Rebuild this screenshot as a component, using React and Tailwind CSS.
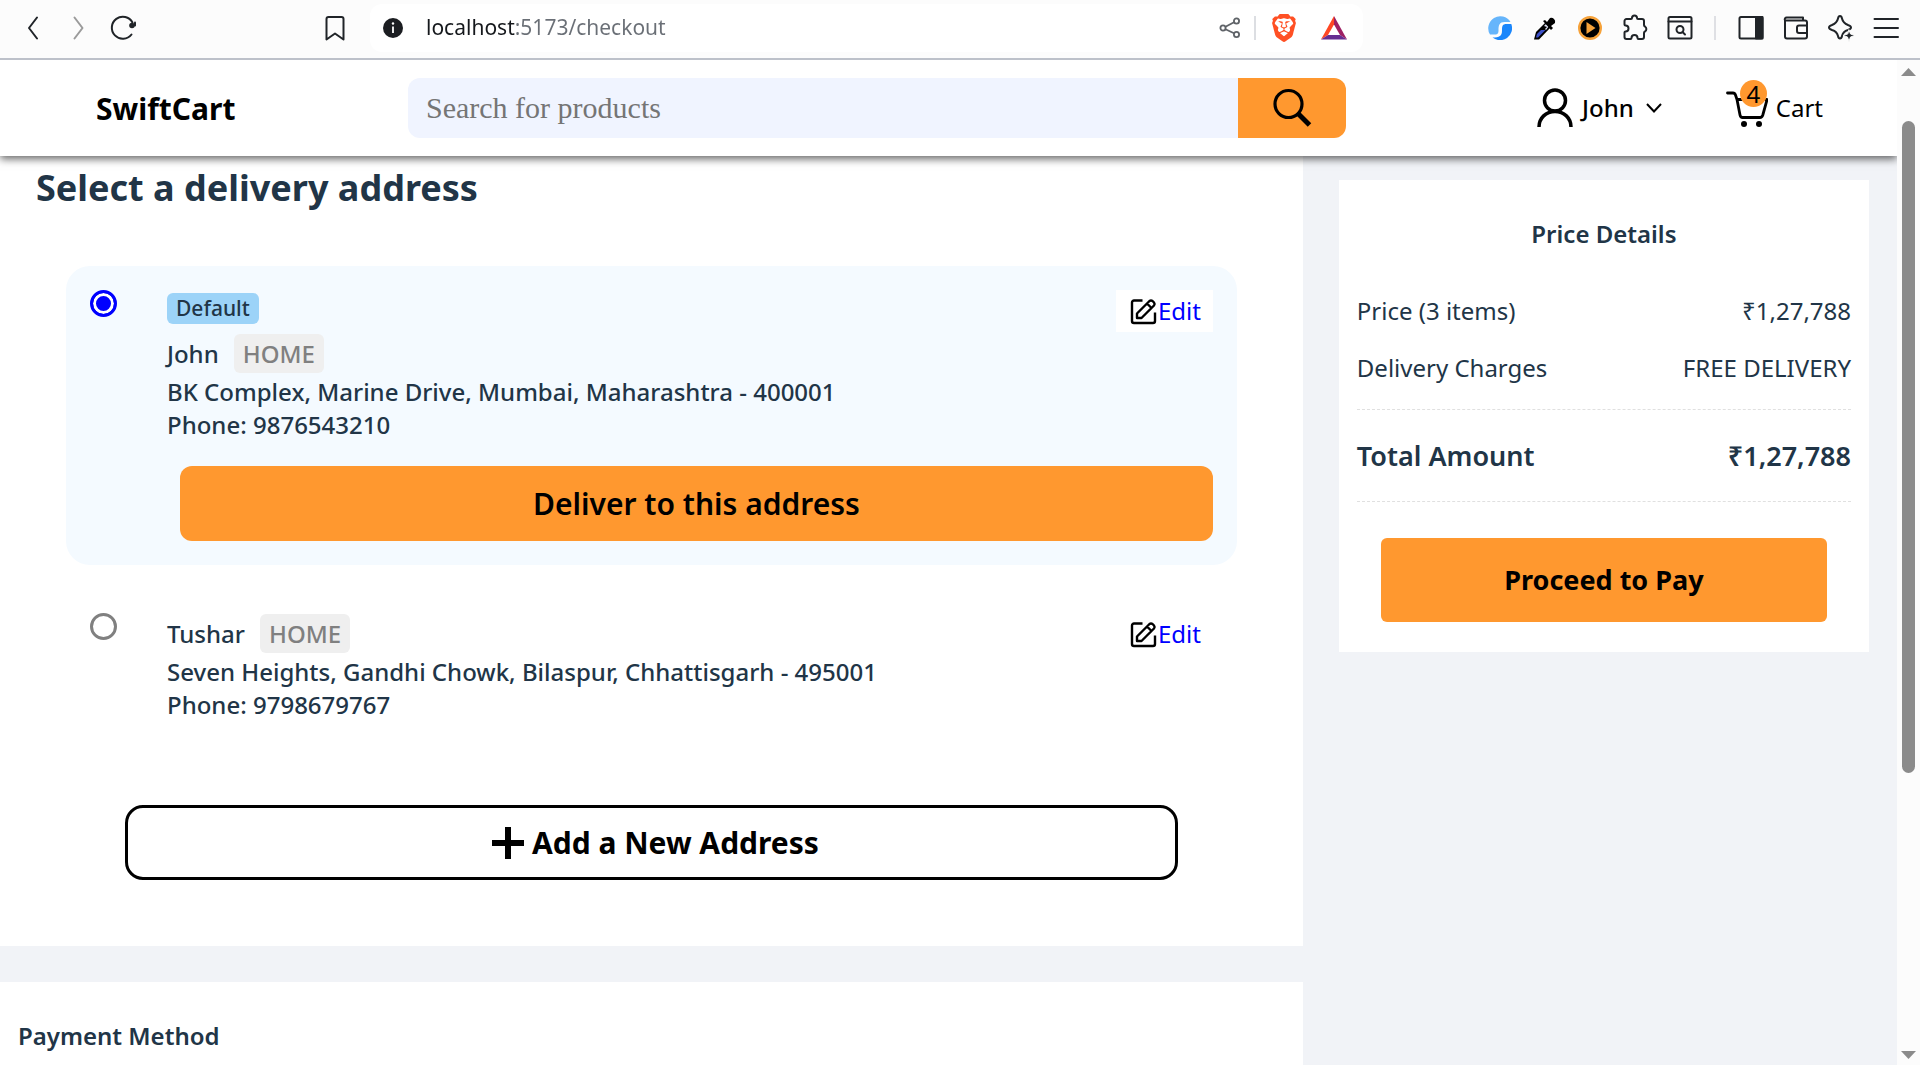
import React from "react";
import { SiBrave } from "react-icons/si";

const dark = "#202428";

function ToolButton({ label, children }) {
  return (
    <button aria-label={label} className="flex h-11 w-[45px] items-center justify-center">
      {children}
    </button>
  );
}

function Icon({ children, size = 28, stroke = dark, width = 2 }) {
  return (
    <svg width={size} height={size} viewBox="0 0 28 28" fill="none" stroke={stroke} strokeWidth={width} strokeLinejoin="round" strokeLinecap="round" aria-hidden="true">
      {children}
    </svg>
  );
}

function BrowserBar() {
  return (
    <div className="z-20 flex shrink-0 items-center border-b-2 border-[#bdc1ca] bg-[#fcfcfc] pt-1 pb-1.5 pr-3 pl-[10px]">
      <ToolButton label="Back">
        <Icon><path d="M18 3.500 10 14l8 10.500" /></Icon>
      </ToolButton>
      <ToolButton label="Forward">
        <Icon stroke="#9b9b9b"><path d="M10.500 3.500 18.500 14l-8 10.500" /></Icon>
      </ToolButton>
      <ToolButton label="Reload">
        <Icon>
          <path d="M22.500 20.500A11 11 0 1 1 23.500 8.500" />
          <circle cx="23" cy="11.500" r="2.800" fill={dark} stroke="none" />
          <path d="M26 8.500v3" />
        </Icon>
      </ToolButton>
      <div className="mr-[13px] ml-[167px]">
        <ToolButton label="Bookmark">
          <Icon><path d="M5.500 5a2 2 0 0 1 2-2h13a2 2 0 0 1 2 2v20.500L14 19.500l-8.500 6z" /></Icon>
        </ToolButton>
      </div>
      <div className="flex h-12 flex-1 items-center rounded-xl bg-white pl-[13px]">
        <svg width="20" height="20" viewBox="0 0 20 20" aria-hidden="true">
          <circle cx="10" cy="10" r="10" fill="#1b1d21" />
          <circle cx="10" cy="5.500" r="1.200" fill="#fff" />
          <path d="M10 8.500v6.500" stroke="#fff" strokeWidth="1.800" />
        </svg>
        <input
          type="text"
          aria-label="Address"
          defaultValue="localhost:5173/checkout"
          className="ml-[23px] min-w-0 flex-1 bg-[linear-gradient(90deg,#15181c_89px,#6a6f76_89px)] bg-clip-text text-[21px] text-transparent outline-none"
        />
        <button aria-label="Share" className="mr-[13px]">
          <svg width="22" height="22" viewBox="0 0 22 22" fill="none" stroke="#5f6368" strokeWidth="1.800" aria-hidden="true">
            <circle cx="4" cy="11" r="2.600" /><circle cx="17.500" cy="4" r="2.600" /><circle cx="17.500" cy="17.500" r="2.600" />
            <path d="m6.500 9.800 8.500-4.500M6.500 12.200l8.500 4" />
          </svg>
        </button>
        <span className="h-6 w-0.5 bg-[#dcdee2]" />
        <button aria-label="Brave Shields" className="mx-[14px]"><SiBrave size={28} color="#ff5024" /></button>
        <button aria-label="Rewards" className="mr-[15px] ml-2">
          <svg width="28" height="28" viewBox="0 0 28 28" aria-hidden="true">
            <path d="M14 2 1 25.500l7-4.500 6-10.500z" fill="#ff4724" />
            <path d="m14 2 13 23.500-7-4.500-6-10.500z" fill="#9e1f63" />
            <path d="M1 25.500h26L20 21H8z" fill="#662d91" />
          </svg>
        </button>
      </div>
      <div className="ml-[114px] flex items-center">
        <ToolButton label="Sync extension">
          <svg width="24" height="24" viewBox="0 0 24 24" aria-hidden="true">
            <path d="M22.500 6A12 12 0 1 0 2 18.500h5c3 0 3.500-1.500 3.500-4.500 0-5 1-8 6-8z" fill="#66b5fb" />
            <path d="M23.300 8A12 12 0 0 1 4.500 21.500c7 0 9.500-1.500 9.500-7 0-4.500.5-6.500 4.500-6.500z" fill="#1a86fb" />
          </svg>
        </ToolButton>
        <ToolButton label="Color picker">
          <svg width="24" height="24" viewBox="0 0 24 24" aria-hidden="true">
            <path d="M13 6 3 16l-2 7.500h5L18 11z" fill="#000" />
            <path d="m8 14-4 4-1 3.500h2L12.500 14z" fill="#3d50c8" />
            <path d="m13 8-2 2 3 1-2 2 1 1 3-4z" fill="#dfe3f5" />
            <path d="m10 5 2-1 2 2 3-4a4 4 0 0 1 5 5l-4 3 2 2-2 2z" fill="#000" />
          </svg>
        </ToolButton>
        <ToolButton label="Player">
          <svg width="24" height="24" viewBox="0 0 24 24" aria-hidden="true">
            <circle cx="12" cy="12" r="10.800" fill="#000" stroke="#f6a23a" strokeWidth="2.400" />
            <path d="m8.500 6 9 6-9 6z" fill="#f6a23a" />
          </svg>
        </ToolButton>
        <ToolButton label="Extensions">
          <Icon>
            <path d="M3.500 7a2 2 0 0 1 2-2H10q1 0 1-1a2.500 2.500 0 0 1 5 0q0 1 1 1h4a2 2 0 0 1 2 2v4q0 1 1 1.500a3 3 0 0 1 0 5q-1 .5-1 1.500v4a2 2 0 0 1-2 2h-3.500q-1 0-1-1a3 3 0 0 0-6 0q0 1-1 1h-4a2 2 0 0 1-2-2v-4.500q0-1 1-1a3 3 0 0 0 0-6q-1 0-1-1z" />
          </Icon>
        </ToolButton>
        <ToolButton label="Search tabs">
          <Icon>
            <rect x="2.500" y="3" width="23" height="21.500" rx="1.500" /><path d="M2.500 7.500h23" />
            <circle cx="14" cy="15.500" r="3.500" /><path d="m16.500 18 2.500 2.500" />
          </Icon>
        </ToolButton>
        <span className="mx-3 h-6 w-0.5 bg-[#dfe0e4]" />
        <ToolButton label="Side panel">
          <Icon><rect x="2.500" y="3" width="23" height="21.500" rx="1.500" /><path d="M19 3h6.500v21.500H19z" fill={dark} /></Icon>
        </ToolButton>
        <ToolButton label="Wallet">
          <Icon>
            <path d="M3 6.500v16a2 2 0 0 0 2 2h18a2 2 0 0 0 2-2v-14a2 2 0 0 0-2-2H3a2 2 0 0 1 2-3h16v3M25 11.500h-8a2 2 0 0 0-2 2v3.500a2 2 0 0 0 2 2h8" />
          </Icon>
        </ToolButton>
        <ToolButton label="Leo AI">
          <Icon>
            <path d="M13 2q1.500 0 2 2.500 1 4.500 6 6.500 3 1 3 2.500t-3 2.500q-5 1.500-6 6-.5 2.500-2 2.500T11 22q-1-4.500-6-6-3-1-3-2.500T5 11q5-2 6-6.500Q11.500 2 13 2z" />
            <path d="m22 16 1.500 4L28 21.500 23.500 23 22 27.500 20.500 23 16 21.500l4.500-1.500z" fill={dark} stroke="#fcfcfc" strokeWidth="1" />
          </Icon>
        </ToolButton>
        <ToolButton label="Menu">
          <Icon><path d="M2.500 5h23.500M2.500 14h23.500M2.500 23h23.500" /></Icon>
        </ToolButton>
      </div>
    </div>
  );
}

function StoreHeader() {
  return (
    <header className="z-10 flex h-24 shrink-0 items-center bg-white pl-24 text-2xl text-black shadow-[0_3px_8px_0_rgba(0,0,0,0.6)]">
      <a href="#home" className="w-[312px] pt-0.5 text-[30px] leading-9 font-bold">SwiftCart</a>
      <form className="flex h-15 flex-1" onSubmit={(e) => e.preventDefault()}>
        <input
          type="text"
          aria-label="Search for products"
          placeholder="Search for products"
          className="min-w-0 flex-1 rounded-l-xl bg-[#f0f4ff] px-[18px] font-['Liberation_Serif',serif] text-[30px] outline-none placeholder:text-[#757575]"
        />
        <button aria-label="Search" className="flex w-27 items-center justify-center rounded-r-xl bg-[#ff982f]">
          <svg width="40" height="40" viewBox="0 0 40 40" fill="none" stroke="#000" aria-hidden="true">
            <circle cx="16.500" cy="16" r="13.500" strokeWidth="3.200" />
            <path d="M25.500 25 37.500 37" strokeWidth="5" />
          </svg>
        </button>
      </form>
      <button className="ml-[191px] flex items-center font-medium">
        <svg width="36" height="40" viewBox="0 0 36 40" fill="none" stroke="#000" strokeWidth="3.500" aria-hidden="true">
          <circle cx="18" cy="12.500" r="10.500" />
          <path d="M2 39c0-9 7-15.500 16-15.500S34 30 34 39" />
        </svg>
        <span className="ml-[9px]">John</span>
        <svg className="ml-3" width="16" height="10" viewBox="0 0 16 10" fill="none" stroke="#000" strokeWidth="2" aria-hidden="true">
          <path d="m1 1 7 7.500L15 1" />
        </svg>
      </button>
      <a href="#cart" className="mr-[74px] ml-16 flex items-center">
        <span className="relative">
          <svg width="42" height="40" viewBox="0 0 42 40" fill="none" stroke="#000" strokeWidth="2.800" strokeLinecap="round" strokeLinejoin="round" aria-hidden="true">
            <path d="M1.500 5H7q1.800 0 2.500 2l1.500 4.500L14 27q.5 2.500 2.500 2.500H34q2 0 2.800-2.500L41 12M11 11.500h30" />
            <circle cx="18" cy="36" r="3" fill="#000" stroke="none" /><circle cx="33" cy="36" r="3" fill="#000" stroke="none" />
          </svg>
          <span className="absolute -top-2 left-[14px] flex h-[27px] w-[27px] items-center justify-center rounded-full bg-[#ff982f]">4</span>
        </span>
        <span className="ml-2">Cart</span>
      </a>
    </header>
  );
}

function EditIcon() {
  return (
    <svg width="27" height="27" viewBox="0 0 27 27" fill="none" stroke="#000" strokeWidth="2.400" strokeLinejoin="round" aria-hidden="true">
      <path d="M12.500 2.500H4a2 2 0 0 0-2 2V23a2 2 0 0 0 2 2h19a2 2 0 0 0 2-2v-8.500" />
      <path d="M7 20v-4.500L19.500 3q1.500-1.200 3 0l1.500 1.500q1.200 1.500 0 3L11.500 20zM17 5.500 21.500 10" />
    </svg>
  );
}

function Address({ id, name, address, phone, isDefault, onSelect, selected }) {
  return (
    <article className={selected ? "flex rounded-3xl bg-[#f4faff] p-6" : "flex rounded-3xl bg-white p-6"}>
      <input
        id={id}
        type="radio"
        name="address"
        checked={selected}
        onChange={onSelect}
        className="h-[27px] w-[27px] shrink-0 appearance-none rounded-full border-3 border-[#808080] bg-white checked:border-[#0000ff] checked:bg-[#0000ff] checked:shadow-[inset_0_0_0_3px_white]"
      />
      <div className="ml-[50px] flex-1">
        <div className="flex items-start justify-between">
          <label htmlFor={id} className="block">
            {isDefault && (
              <span className="mt-[3px] mb-[10px] block w-fit rounded-md bg-[#9cd3f8] px-[9px] text-[21px] leading-[31px]">Default</span>
            )}
            <span className={isDefault ? "flex items-center" : "flex items-center pt-px"}>
              {name}
              <span className="ml-[15px] rounded-md bg-[#efefef] px-[9px] py-[3px] text-[#808080]">HOME</span>
            </span>
            <span className="mt-[2px] block">{address}</span>
            <span className="block">Phone: {phone}</span>
          </label>
          <button className="flex items-center bg-white px-3 py-1 pl-[14px] font-normal leading-[34px] text-[#0000ff]">
            <EditIcon />
            <span className="ml-px">Edit</span>
          </button>
        </div>
        {selected && (
          <button className="mt-[25px] ml-[13px] flex h-[75px] w-[calc(100%-13px)] items-center justify-center rounded-xl bg-[#ff982f] text-[30px] font-semibold text-black">
            Deliver to this address
          </button>
        )}
      </div>
    </article>
  );
}

const addresses = [
  { id: "john", name: "John", address: "BK Complex, Marine Drive, Mumbai, Maharashtra - 400001", phone: "9876543210", isDefault: true },
  { id: "tushar", name: "Tushar", address: "Seven Heights, Gandhi Chowk, Bilaspur, Chhattisgarh - 495001", phone: "9798679767" },
];

function PriceDetails() {
  return (
    <aside className="mt-6 mr-7 w-[calc(28%-1px)] shrink-0 self-start bg-white px-[18px] pb-[30px] font-normal">
      <h2 className="pt-[37px] text-center font-semibold">Price Details</h2>
      <dl className="mt-8">
        <div className="flex justify-between py-3"><dt>Price (3 items)</dt><dd>₹1,27,788</dd></div>
        <div className="flex justify-between py-3"><dt>Delivery Charges</dt><dd>FREE DELIVERY</dd></div>
        <div className="mt-[13px] flex justify-between border-y border-dashed border-[#e0e0e0] pt-7 pb-[27px] text-[27px] leading-9 font-semibold">
          <dt>Total Amount</dt><dd>₹1,27,788</dd>
        </div>
      </dl>
      <div className="px-6 pt-9">
        <button className="h-21 w-full rounded-md bg-[#ff982f] text-[27px] leading-9 font-bold text-black">Proceed to Pay</button>
      </div>
    </aside>
  );
}

function Scrollbar() {
  return (
    <div className="z-20 flex w-[23px] shrink-0 flex-col items-center bg-[#fcfcfc] pt-2 pb-[6px]" aria-hidden="true">
      <svg width="15" height="8" viewBox="0 0 15 8"><path d="M0 8 7.500 0 15 8z" fill="#8b8b8b" /></svg>
      <div className="flex min-h-0 w-[13px] flex-1 flex-col pt-[45px] pb-[278px]">
        <div className="flex-1 rounded-full bg-[#8b8b8b]" />
      </div>
      <svg width="15" height="8" viewBox="0 0 15 8"><path d="M0 0h15L7.500 8z" fill="#8b8b8b" /></svg>
    </div>
  );
}

export default function App() {
  const [selected, setSelected] = React.useState("john");
  return (
    <div className="flex h-screen flex-col overflow-hidden bg-white font-['Noto_Sans',sans-serif] text-[#213547]">
      <BrowserBar />
      <div className="flex min-h-0 flex-1">
        <div className="flex min-w-0 flex-1 flex-col">
          <StoreHeader />
          <div className="flex min-h-0 flex-1 gap-9 overflow-hidden bg-[#f1f3f7] text-2xl leading-[33px] font-medium">
            <main className="flex min-w-0 flex-1 flex-col gap-9">
              <section className="bg-white px-[66px] pt-2 pb-[66px]">
                <h1 className="-ml-[30px] text-4xl leading-[48px] font-bold">Select a delivery address</h1>
                <div className="mt-[54px] flex flex-col gap-6">
                  {addresses.map((a) => (
                    <Address key={a.id} {...a} selected={selected === a.id} onSelect={() => setSelected(a.id)} />
                  ))}
                </div>
                <div className="mt-15 px-[59px]">
                  <button className="flex h-[75px] w-full items-center justify-center gap-2 rounded-[18px] border-3 border-black pl-2 text-[30px] font-bold text-black">
                    <svg width="32" height="32" viewBox="0 0 32 32" fill="none" stroke="#000" strokeWidth="6" aria-hidden="true">
                      <path d="M16 0v32M0 16h32" />
                    </svg>
                    Add a New Address
                  </button>
                </div>
              </section>
              <section className="flex-1 bg-white px-[18px] pt-[37px]">
                <h2 className="font-semibold">Payment Method</h2>
              </section>
            </main>
            <PriceDetails />
          </div>
        </div>
        <Scrollbar />
      </div>
    </div>
  );
}
